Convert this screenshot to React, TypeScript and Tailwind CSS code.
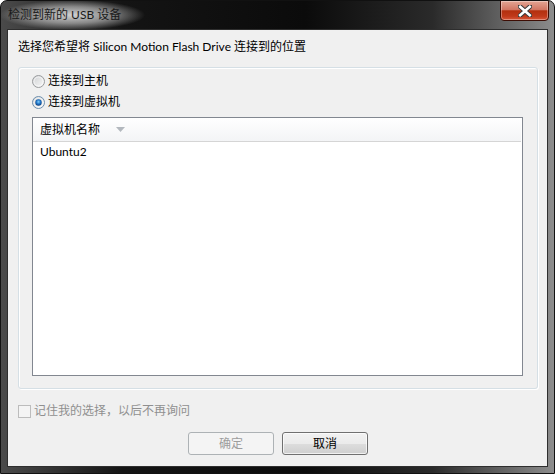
import { useState } from "react";

const font = "font-['Lato','Noto_Sans_CJK_SC',sans-serif]";

const Radio = ({ checked }: { checked: boolean }) => (
  <svg width="13" height="13" viewBox="0 0 13 13" className="shrink-0">
    <defs>
      <linearGradient id="rbg" x1="0" y1="0" x2="1" y2="1">
        <stop offset="0%" stopColor="#cfd1d3" />
        <stop offset="100%" stopColor="#f9f9f9" />
      </linearGradient>
      <radialGradient id="rdot" cx="50%" cy="40%" r="60%">
        <stop offset="0%" stopColor="#7fd0ff" />
        <stop offset="55%" stopColor="#1f72c4" />
        <stop offset="100%" stopColor="#0b3f80" />
      </radialGradient>
    </defs>
    <circle cx="6.5" cy="6.5" r="6" fill="url(#rbg)" stroke={checked ? "#6d8fae" : "#9a9c9e"} />
    <circle cx="6.5" cy="6.5" r="4.5" fill="none" stroke="#ffffff" strokeOpacity="0.6" />
    {checked && <circle cx="6.5" cy="6.5" r="3.2" fill="url(#rdot)" />}
  </svg>
);

const CloseButton = () => (
  <div className="ml-auto -mt-px -mr-px w-[49px] h-[21px] rounded-b-[4px] border border-[#3d0d04] bg-[linear-gradient(to_bottom,#e3a594_0%,#d27764_45%,#b3300f_52%,#c0391a_80%,#d8583a_100%)] shadow-[inset_0_0_0_1px_rgba(255,255,255,0.35)] flex items-center justify-center">
    <svg width="14" height="12" viewBox="0 0 14 12">
      <path d="M2 1.5 L12 10.5 M12 1.5 L2 10.5" stroke="#3a3a3a" strokeWidth="4.6" strokeLinecap="square" />
      <path d="M2.2 1.8 L11.8 10.2 M11.8 1.8 L2.2 10.2" stroke="#ffffff" strokeWidth="2.6" strokeLinecap="square" />
    </svg>
  </div>
);

export default function App() {
  const [mode, setMode] = useState<"host" | "vm">("vm");

  return (
    <div className={`${font} w-[555px] h-[474px] rounded-t-[7px] border border-[#111] bg-[linear-gradient(to_right,#4a4a4a_0%,#141414_22%,#0b0b0b_55%,#2a2a2a_78%,#8c8c8c_100%)] flex flex-col px-[6px] pb-[6px] text-[12px] text-black overflow-hidden`}>
      {/* Title bar */}
      <div className="h-[28px] flex items-start">
        <div className="-ml-[7px] -mt-px pl-[8px] pr-[24px] h-[30px] flex items-center leading-4 text-[#1a1a1a] bg-[radial-gradient(ellipse_closest-side,rgba(228,228,228,0.9)_0%,rgba(200,200,200,0.6)_55%,rgba(120,120,120,0)_100%)]">
          检测到新的 USB 设备
        </div>
        <CloseButton />
      </div>

      {/* Client area */}
      <div className="flex-1 border border-[#2e2e2e] bg-[#f0f0f0] flex flex-col">
        <div className="pt-[9px] pl-[10px] leading-4">
          选择您希望将 Silicon Motion Flash Drive 连接到的位置
        </div>

        <div className="mt-[12px] ml-[10px] w-[520px] h-[322px] rounded-[3px] border border-[#d5dfe5] shadow-[inset_1px_1px_0_#ffffff,1px_1px_0_#ffffff] flex flex-col pl-[13px]">
          <label className="mt-[5px] flex items-center gap-[3px] leading-4 cursor-default" onClick={() => setMode("host")}>
            <Radio checked={mode === "host"} />
            <span>连接到主机</span>
          </label>
          <label className="mt-[5px] flex items-center gap-[3px] leading-4 cursor-default" onClick={() => setMode("vm")}>
            <Radio checked={mode === "vm"} />
            <span>连接到虚拟机</span>
          </label>

          <div className="mt-[7px] w-[491px] h-[259px] border border-[#828790] bg-white flex flex-col">
            <div className="h-[24px] border-b border-[#d5d5d5] bg-[linear-gradient(to_bottom,#ffffff,#f3f4f6)] flex items-center pl-[7px] mr-px">
              <span className="leading-4">虚拟机名称</span>
              <svg width="9" height="5" viewBox="0 0 9 5" className="ml-[16px]">
                <path d="M0 0 H9 L4.5 5 Z" fill="#b3b8be" />
              </svg>
            </div>
            <div className="mt-[2px] pl-[7px] leading-4">Ubuntu2</div>
          </div>
        </div>

        <div className="mt-[14px] pl-[10px] flex items-center gap-[3px] leading-4 text-[#8f8f8f]">
          <span className="w-[13px] h-[13px] border border-[#bcbcbc] bg-[#f4f4f4]" />
          <span>记住我的选择，以后不再询问</span>
        </div>

        <div className="mt-[13px] ml-[180px] flex gap-[8px]">
          <button className="w-[86px] h-[23px] rounded-[3px] border border-[#adb2b5] bg-[#f4f4f4] text-[#9d9d9d] leading-4">
            确定
          </button>
          <button className="w-[86px] h-[23px] rounded-[3px] border border-[#707070] bg-[linear-gradient(to_bottom,#f2f2f2_0%,#ebebeb_50%,#dddddd_51%,#cfcfcf_100%)] shadow-[inset_0_0_0_1px_rgba(255,255,255,0.7)] leading-4">
            取消
          </button>
        </div>
      </div>
    </div>
  );
}
